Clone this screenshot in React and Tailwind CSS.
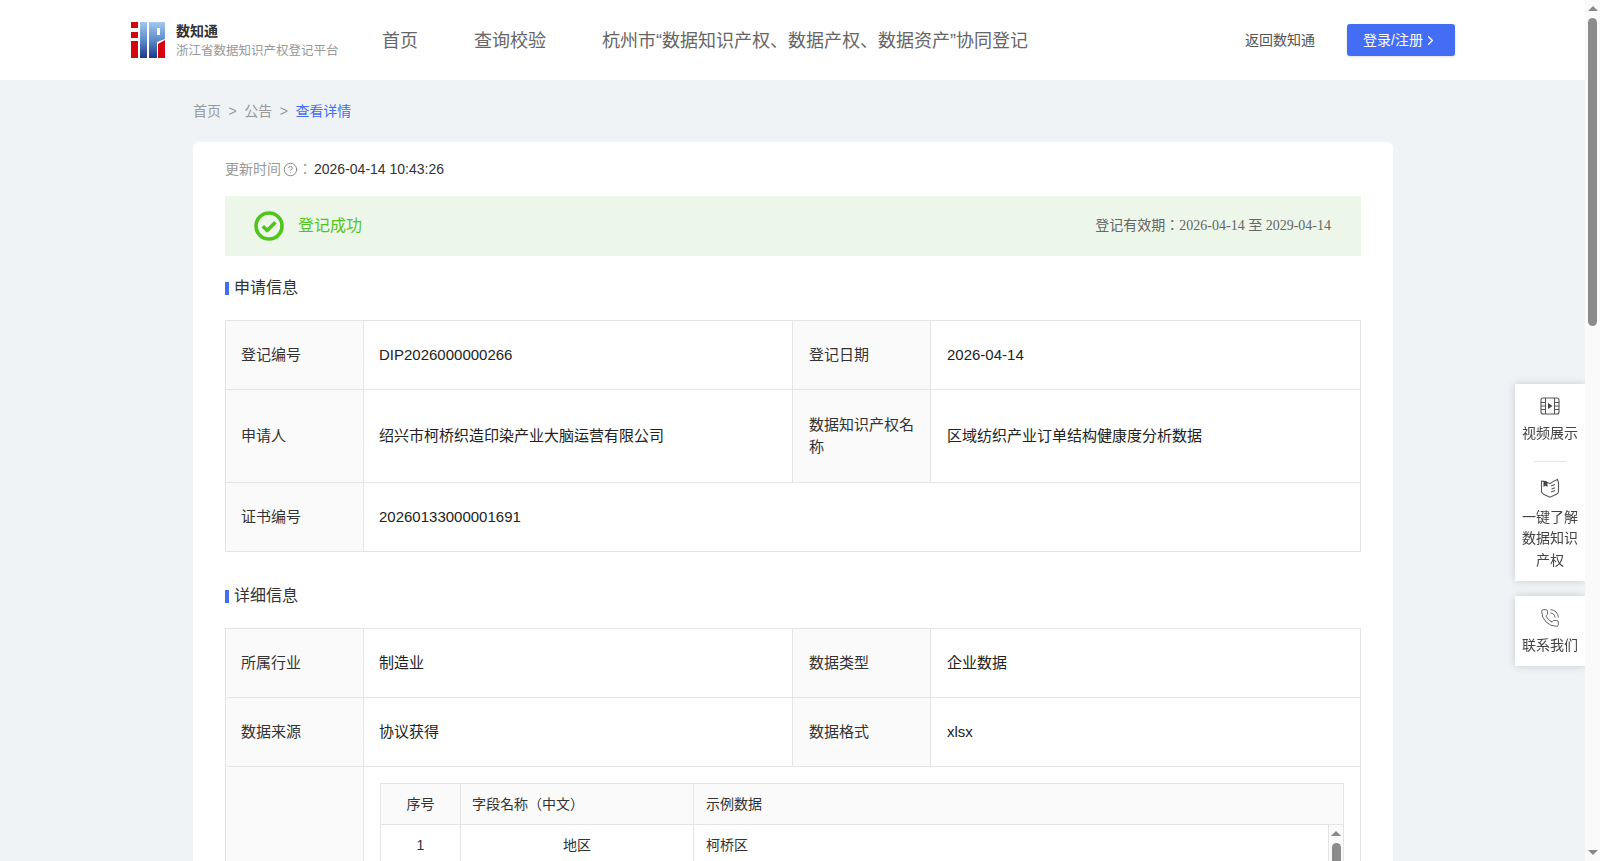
import React from "react";
import { ChevronRight, CircleHelp, PhoneCall } from "lucide-react";

const font = "font-['Liberation_Sans','Noto_Sans_CJK_JP',sans-serif]";

const Logo = () => (
  <svg width="34" height="36" viewBox="0 0 34 36" className="shrink-0">
    <defs>
      <linearGradient id="logoBlue" x1="0" y1="0" x2="0" y2="1">
        <stop offset="0" stopColor="#a4c8ee" />
        <stop offset="0.5" stopColor="#5c8ccb" />
        <stop offset="1" stopColor="#1d3887" />
      </linearGradient>
    </defs>
    <rect x="0" y="0" width="7" height="6" fill="#d5050d" />
    <rect x="0" y="10" width="7" height="6" fill="#d5050d" />
    <rect x="0" y="19" width="7" height="17" fill="#d5050d" />
    <rect x="9" y="0" width="7" height="36" fill="url(#logoBlue)" />
    <path d="M18 0H34V17L26 20V36H18Z" fill="url(#logoBlue)" />
    <rect x="26" y="6" width="3" height="7" fill="#fff" />
    <path d="M27 22L34 18V36H27Z" fill="#d5050d" />
  </svg>
);

const FilmIcon = () => (
  <svg width="20" height="18" viewBox="0 0 20 18" fill="none" stroke="#555" strokeWidth="1.1">
    <rect x="1" y="1" width="18" height="16" rx="2" />
    <path d="M5.5 1V17M14.5 1V17M1 5.5H5.5M1 9H5.5M1 12.5H5.5M14.5 5.5H19M14.5 9H19M14.5 12.5H19" />
    <path d="M8 6L12.5 9L8 12Z" fill="#444" stroke="none" />
  </svg>
);

const BookIcon = () => (
  <svg width="20" height="20" viewBox="0 0 20 20" fill="none" stroke="#555" strokeWidth="1.1">
    <path d="M1.5 3C4 3 7 3.6 10 5.6C12 4 14.5 2.4 17.5 1.5C18.2 3 18.5 4 18.5 6V13.5C18.5 15 17.5 15.6 16.5 16.2L10 19.2L4 16.4C2.5 15.6 1.5 15 1.5 13.5Z" />
    <path d="M3.5 2.6V9L5.5 7.4L7.5 9V4" fill="#444" stroke="none" />
    <path d="M11 8L15 6.6M11.6 11L15 9.8M11 14L15 12.6" />
  </svg>
);

const CheckIcon = () => (
  <svg width="30" height="30" viewBox="0 0 30 30" fill="none" className="shrink-0">
    <circle cx="15" cy="15" r="13" stroke="#4fc41c" strokeWidth="3.6" />
    <path d="M8.8 15.2L13.2 19.4L21.4 11.2" stroke="#4fc41c" strokeWidth="3.6" strokeLinejoin="round" />
  </svg>
);

const Label = ({ children }) => (
  <td className="border border-[#e4e4e4] bg-[#fafafa] py-0 pr-4 pl-4 leading-[22px] text-[#333] first:pl-[15px]">
    {children}
  </td>
);

const Value = ({ children, colSpan }) => (
  <td
    colSpan={colSpan}
    className="border border-[#e4e4e4] py-0 pr-4 pl-4 leading-[22px] text-[#222] [&:nth-child(2)]:pl-[15px]"
  >
    {children}
  </td>
);

const Section = ({ title }) => (
  <div className="flex h-[24px] items-center gap-[5px]">
    <span className="h-[13px] w-[4px] bg-[#446df6]" />
    <span className="text-base text-[#333]">{title}</span>
  </div>
);

const InfoTable = ({ children }) => (
  <table className="w-[1135px] table-fixed border-collapse text-[15px]">
    <colgroup>
      <col className="w-[138px]" />
      <col className="w-[429px]" />
      <col className="w-[138px]" />
      <col className="w-[430px]" />
    </colgroup>
    <tbody>{children}</tbody>
  </table>
);

const ScrollBar = ({ className, thumb }) => (
  <div className={`flex flex-col items-center bg-[#fafafa] ${className}`}>
    <span className="mt-[6px] h-0 w-0 border-x-[5px] border-b-[5px] border-x-transparent border-b-[#888]" />
    <span className={`mt-[7px] w-[9px] rounded-full bg-[#8c8c8c] ${thumb}`} />
    <span className="mt-auto mb-[6px] h-0 w-0 border-x-[5px] border-t-[5px] border-x-transparent border-t-[#888]" />
  </div>
);

const FieldTable = () => (
  <div className="w-[964px] text-sm text-[#333]">
    <div className="flex h-[42px] items-center border border-[#e4e4e4] bg-[#fafafa]">
      <div className="w-[79px] text-center">序号</div>
      <div className="flex h-full w-[234px] items-center border-x border-[#e4e4e4] pl-[11px]">字段名称（中文）</div>
      <div className="pl-3">示例数据</div>
    </div>
    <div className="flex h-[240px] border-x border-b border-[#e4e4e4]">
      <div className="flex-1">
        <div className="flex h-[41px] items-center border-b border-[#e4e4e4]">
          <div className="w-[79px] text-center">1</div>
          <div className="flex h-full w-[234px] items-center justify-center border-x border-[#e4e4e4]">地区</div>
          <div className="pl-3">柯桥区</div>
        </div>
      </div>
      <ScrollBar className="w-[15px] border-l border-[#e4e4e4]" thumb="h-[120px]" />
    </div>
  </div>
);

const SideButton = ({ icon, gap, children }) => (
  <div className="flex flex-col items-center">
    {icon}
    <div className={`w-[56px] text-center text-sm leading-[21.5px] text-[#444] ${gap}`}>{children}</div>
  </div>
);

export default function App() {
  return (
    <div className={`min-h-[2306px] w-[1585px] bg-[#eff3f6] ${font}`}>
      <header className="flex h-20 items-center bg-white pl-[131px] pr-[130px]">
        <Logo />
        <div className="ml-[11px] w-[164px] pt-[2px]">
          <div className="text-sm leading-5 font-bold text-[#333]">数知通</div>
          <div className="whitespace-nowrap text-[12.5px] leading-5 text-[#999]">浙江省数据知识产权登记平台</div>
        </div>
        <nav className="ml-[42px] flex gap-14 pt-[2px] text-lg text-[#666]">
          <span>首页</span>
          <span>查询校验</span>
          <span>杭州市“数据知识产权、数据产权、数据资产”协同登记</span>
        </nav>
        <span className="ml-auto text-sm text-[#555]">返回数知通</span>
        <button className="ml-8 flex h-8 w-[108px] items-center rounded-[3px] bg-[#446df6] pl-4 text-sm text-white shadow-sm">
          登录/注册
          <ChevronRight size={15} />
        </button>
      </header>

      <main className="ml-[193px] w-[1200px]">
        <div className="flex h-[62px] items-center gap-[7.5px] text-sm text-[#999]">
          <span>首页</span>
          <span>&gt;</span>
          <span>公告</span>
          <span>&gt;</span>
          <span className="text-[#446df6]">查看详情</span>
        </div>

        <div className="rounded-md bg-white px-8 pt-4">
          <div className="flex h-[22px] items-center text-sm">
            <span className="text-[#999]">更新时间</span>
            <CircleHelp size={15} strokeWidth={1.6} className="ml-[2px] text-[#888]" />
            <span className="text-[#999]">：</span>
            <span className="ml-[2px] text-[#333]">2026-04-14 10:43:26</span>
          </div>

          <div className="mt-4 flex h-[60px] items-center bg-[#ecf7e9] pl-[29px] pr-[30px]">
            <CheckIcon />
            <span className="ml-[14px] text-base text-[#52c41a]">登记成功</span>
            <span className="ml-auto font-['Liberation_Serif','Noto_Sans_CJK_JP',serif] text-sm text-[#666]">
              登记有效期：2026-04-14 至 2029-04-14
            </span>
          </div>

          <div className="mt-5 mb-5">
            <Section title="申请信息" />
          </div>
          <InfoTable>
            <tr className="h-[69px]">
              <Label>登记编号</Label>
              <Value>DIP2026000000266</Value>
              <Label>登记日期</Label>
              <Value>2026-04-14</Value>
            </tr>
            <tr className="h-[93px]">
              <Label>申请人</Label>
              <Value>绍兴市柯桥织造印染产业大脑运营有限公司</Value>
              <Label>数据知识产权名称</Label>
              <Value>区域纺织产业订单结构健康度分析数据</Value>
            </tr>
            <tr className="h-[69px]">
              <Label>证书编号</Label>
              <Value colSpan={3}>20260133000001691</Value>
            </tr>
          </InfoTable>

          <div className="mt-[32px] mb-5">
            <Section title="详细信息" />
          </div>
          <InfoTable>
            <tr className="h-[69px]">
              <Label>所属行业</Label>
              <Value>制造业</Value>
              <Label>数据类型</Label>
              <Value>企业数据</Value>
            </tr>
            <tr className="h-[69px]">
              <Label>数据来源</Label>
              <Value>协议获得</Value>
              <Label>数据格式</Label>
              <Value>xlsx</Value>
            </tr>
            <tr>
              <Label />
              <Value colSpan={3}>
                <div className="py-4 pl-px">
                  <FieldTable />
                </div>
              </Value>
            </tr>
          </InfoTable>
          <div className="h-[1180px]" />
        </div>
      </main>

      <aside className="fixed top-[384px] right-[15px] w-[70px]">
        <div className="flex h-[197px] flex-col items-center bg-white pt-[13px] shadow-[0_0_8px_rgba(0,0,0,0.16)]">
          <SideButton icon={<FilmIcon />} gap="mt-[8px]">视频展示</SideButton>
          <div className="mt-[16px] mb-[16px] h-px w-8 bg-[#e4e4e4]" />
          <SideButton icon={<BookIcon />} gap="mt-[9px]">一键了解数据知识产权</SideButton>
        </div>
        <div className="mt-[15px] flex h-[70px] flex-col items-center bg-white pt-[12px] shadow-[0_0_8px_rgba(0,0,0,0.16)]">
          <SideButton icon={<PhoneCall size={20} strokeWidth={1} className="text-[#444]" />} gap="mt-[7px]">联系我们</SideButton>
        </div>
      </aside>

      <ScrollBar className="fixed top-0 right-0 bottom-0 w-[15px]" thumb="h-[308px]" />
    </div>
  );
}
